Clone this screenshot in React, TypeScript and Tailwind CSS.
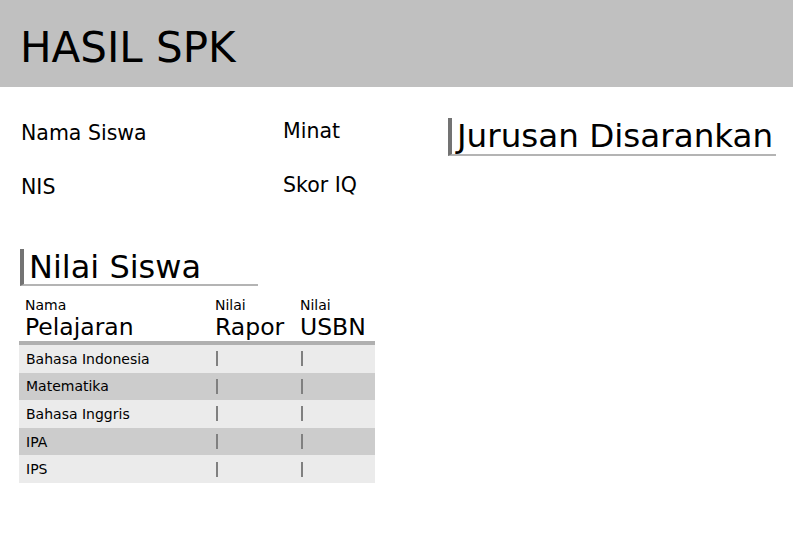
const SUBJECTS = ["Bahasa Indonesia", "Matematika", "Bahasa Inggris", "IPA", "IPS"];

function SectionTitle({ title, width, size }: { title: string; width: string; size: string }) {
  return (
    <div className={`${width} border-l-4 border-l-[#737373] border-b-2 border-b-[#b4b4b4] pl-[5px] pt-[2px] pb-[1px]`}>
      <h2 className={`${size} leading-none text-black`}>{title}</h2>
    </div>
  );
}

function ColHead({ small, big }: { small: string; big: string }) {
  return (
    <>
      <div className="text-[14px] leading-[17px]">{small}</div>
      <div className="text-[23.5px] leading-[26px]">{big}</div>
    </>
  );
}

export default function App() {
  return (
    <div className="w-[793px] h-[559px] bg-white text-black" style={{ fontFamily: '"DejaVu Sans", Verdana, sans-serif' }}>
      <header className="h-[87px] bg-[#c0c0c0] pl-[20px] pt-[27px]">
        <h1 className="text-[42px] leading-none">HASIL SPK</h1>
      </header>

      <main className="flex pl-[20px] pt-[31px]">
        <div className="w-[428px]">
          <div className="flex pt-[5px]">
            <div className="w-[263px] flex flex-col gap-[33px] text-[20.5px] leading-none pl-[1px]">
              <span>Nama Siswa</span>
              <span>NIS</span>
            </div>
            <div className="flex flex-col gap-[33px] text-[20.5px] leading-none -mt-[2px]">
              <span>Minat</span>
              <span>Skor IQ</span>
            </div>
          </div>

          <div className="mt-[52px]">
            <SectionTitle title="Nilai Siswa" width="w-[238px]" size="text-[32px]" />
          </div>

          <div className="mt-[11px] -ml-[1px] w-[356px]">
            {/* table head */}
            <div className="flex items-end border-b-4 border-b-[#b0b0b0] pb-[1px]">
              <div className="w-[196px] pl-[6px]">
                <ColHead small="Nama" big="Pelajaran" />
              </div>
              <div className="w-[85px]">
                <ColHead small="Nilai" big="Rapor" />
              </div>
              <div>
                <ColHead small="Nilai" big="USBN" />
              </div>
            </div>
            {/* rows */}
            {SUBJECTS.map((s, i) => (
              <div
                key={s}
                className={`flex items-center h-[27.6px] text-[14px] ${i % 2 === 0 ? "bg-[#ebebeb]" : "bg-[#cccccc]"}`}
              >
                <div className="w-[196px] pl-[7px] leading-none">{s}</div>
                <div className="w-[85px]">
                  <span className="block w-[2px] h-[15px] bg-[#808080] ml-[1px]" />
                </div>
                <div>
                  <span className="block w-[2px] h-[15px] bg-[#808080] ml-[1px]" />
                </div>
              </div>
            ))}
          </div>
        </div>

        <div>
          <SectionTitle title="Jurusan Disarankan" width="w-[328px]" size="text-[32.6px]" />
        </div>
      </main>
    </div>
  );
}
